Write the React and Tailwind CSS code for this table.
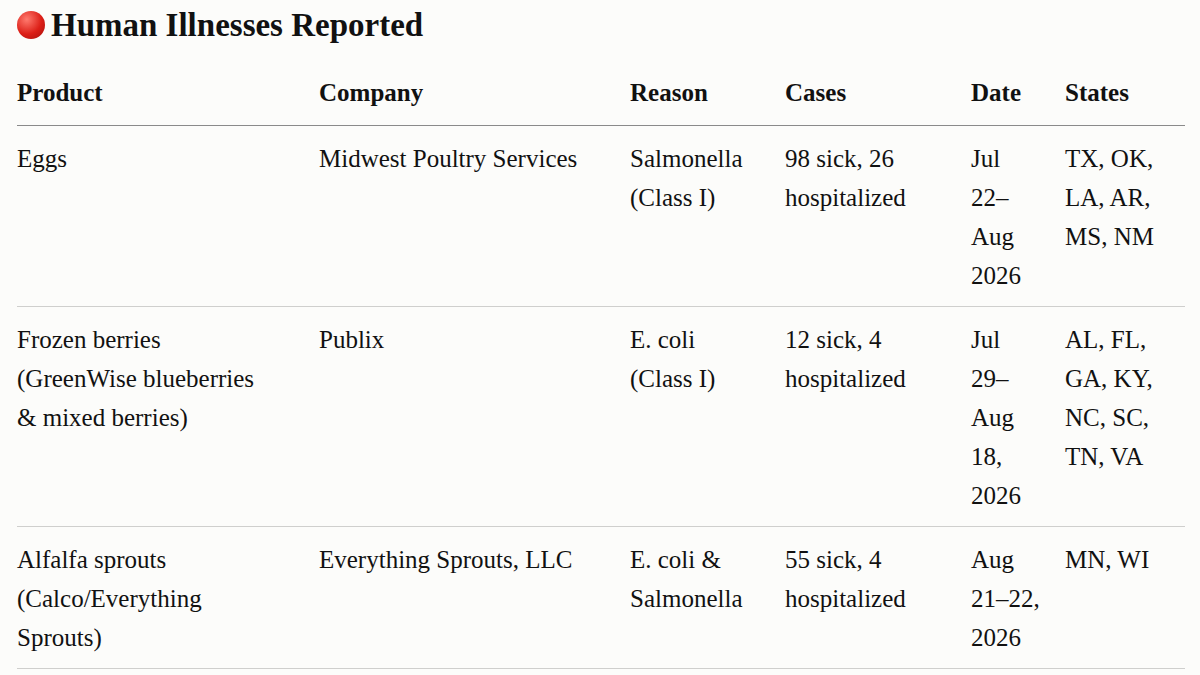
import React from "react";

// Illness-linked recalls shown in the table
const rows = [
  {
    product: "Eggs",
    company: "Midwest Poultry Services",
    reason: "Salmonella (Class I)",
    cases: "98 sick, 26 hospitalized",
    date: "Jul 22–Aug 2026",
    states: "TX, OK, LA, AR, MS, NM",
  },
  {
    product: "Frozen berries (GreenWise blueberries & mixed berries)",
    company: "Publix",
    reason: "E. coli (Class I)",
    cases: "12 sick, 4 hospitalized",
    date: "Jul 29–Aug 18, 2026",
    states: "AL, FL, GA, KY, NC, SC, TN, VA",
  },
  {
    product: "Alfalfa sprouts (Calco/Everything Sprouts)",
    company: "Everything Sprouts, LLC",
    reason: "E. coli & Salmonella",
    cases: "55 sick, 4 hospitalized",
    date: "Aug 21–22, 2026",
    states: "MN, WI",
  },
];

const headers = ["Product", "Company", "Reason", "Cases", "Date", "States"];
const widths = ["w-[302px]", "w-[311px]", "w-[155px]", "w-[186px]", "w-[94px]", "w-[120px]"];
const pads = ["pr-[42px]", "pr-6", "pr-6", "pr-6", "pr-6", "pr-2"];

export default function App() {
  return (
    <div
      className="min-h-screen bg-[#fcfcfa] text-[#111111] px-[17px] pt-[5px]"
      style={{ fontFamily: '"Liberation Serif", "Times New Roman", serif' }}
    >
      <h2 className="flex items-center gap-[6px] text-[33px] leading-[40px] font-bold">
        <span className="inline-block w-[28px] h-[28px] rounded-full bg-[radial-gradient(circle_at_35%_30%,#ff7a6e,#dc1f17_55%,#a50f0b)]" />
        <span>Human Illnesses Reported</span>
      </h2>

      <table className="mt-[15px] w-[1168px] table-fixed border-collapse text-[25px] leading-[39px]">
        <colgroup>
          {widths.map((w) => (
            <col key={w} className={w} />
          ))}
        </colgroup>
        <thead>
          <tr className="border-b border-[#8a8a8a]">
            {headers.map((h, i) => (
              <th key={h} className={`text-left font-bold align-top pt-[13px] pb-[13px] ${pads[i]}`}>
                {h}
              </th>
            ))}
          </tr>
        </thead>
        <tbody>
          {rows.map((r) => (
            <tr key={r.product} className="border-b border-[#cfcfcd]">
              {[r.product, r.company, r.reason, r.cases, r.date, r.states].map((c, i) => (
                <td key={i} className={`align-top pt-[13px] pb-[11px] ${pads[i]}`}>
                  {c}
                </td>
              ))}
            </tr>
          ))}
        </tbody>
      </table>
    </div>
  );
}
